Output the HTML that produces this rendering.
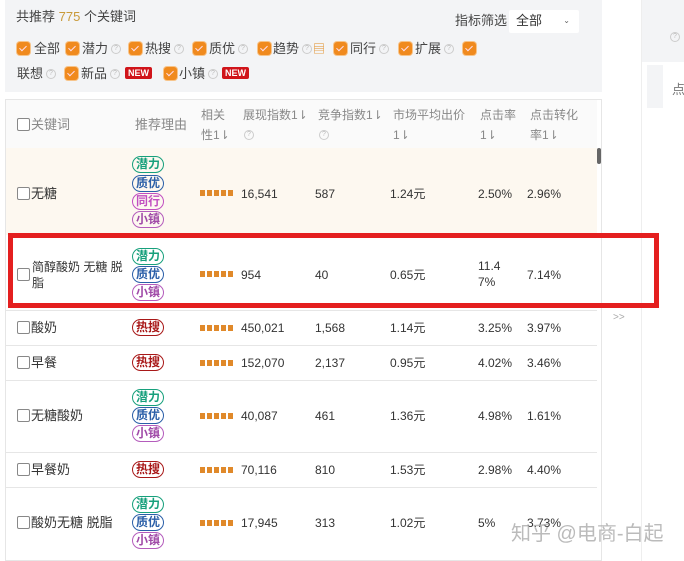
<!DOCTYPE html>
<html><head><meta charset="utf-8"><style>
*{margin:0;padding:0;box-sizing:border-box}
body{width:684px;height:561px;overflow:hidden;background:#fff;font-family:"Liberation Sans","Noto Sans CJK SC",sans-serif;font-size:12px;color:#333;position:relative}
.a{position:absolute;white-space:nowrap;line-height:16px}
.g{color:#777}
.cb{position:absolute;width:13px;height:13px;background:#f08a1e;border-radius:3px;box-shadow:0 0 0 1px #f7c48a}
.cb:after{content:"";position:absolute;left:4px;top:2px;width:3px;height:6px;border:solid #fde;border-width:0 1px 1px 0;transform:rotate(45deg)}
.q{position:absolute;width:10px;height:10px;border:1px solid #ccc;border-radius:50%;font-size:7px;color:#bbb;text-align:center;line-height:8px}
.new{position:absolute;background:#d0141a;color:#fff;font-size:9px;font-weight:bold;padding:0 3px;line-height:12px;border-radius:2px}
.ck{display:inline-block;width:13px;height:13px;border:1px solid #888;border-radius:2px;background:#fff;vertical-align:-2px;margin-right:1px}
.tag{position:absolute;left:132px;width:32px;height:17px;border:1.5px solid;border-radius:9px;font-size:12px;font-weight:bold;text-align:center;line-height:14px}
.t1{color:#17a07c;border-color:#17a07c}
.t2{color:#2b5fa8;border-color:#2b5fa8}
.t3{color:#c14ec1;border-color:#c14ec1}
.t4{color:#a04aa8;border-color:#b45cbc}
.t5{color:#a81818;border-color:#a81818}
.bar{position:absolute;left:200px;width:34px;height:6px;background:repeating-linear-gradient(90deg,#e0892a 0 5px,transparent 5px 7px)}
.line{position:absolute;left:5px;width:592px;height:1px;background:#e6e6e6}
.h{color:#888;font-size:12px;line-height:20px}
.f{position:absolute;color:#444;font-size:13px;line-height:16px}
.k{font-size:13px}
</style></head><body>
<div class="a" style="left:5px;top:0;width:597px;height:92px;background:#f3f4f6"></div>
<div class="a" style="left:16px;top:9px;color:#444;font-size:13px">共推荐 <span style="color:#c99a3a">775</span> 个关键词</div>
<div class="a" style="left:455px;top:13px;color:#444;font-size:13px">指标筛选</div>
<div class="a" style="left:509px;top:10px;width:70px;height:23px;background:#fff;border-radius:2px;padding:3px 0 0 7px;font-size:13px">全部<span style="position:absolute;right:9px;top:3px;font-size:8px;color:#666">⌄</span></div>
<!-- filter row 1 -->
<div class="cb" style="left:17px;top:42px"></div><div class="f" style="left:34px;top:41px">全部</div>
<div class="cb" style="left:66px;top:42px"></div><div class="f" style="left:82px;top:41px">潜力</div><div class="q" style="left:111px;top:44px">?</div>
<div class="cb" style="left:129px;top:42px"></div><div class="f" style="left:145px;top:41px">热搜</div><div class="q" style="left:174px;top:44px">?</div>
<div class="cb" style="left:193px;top:42px"></div><div class="f" style="left:209px;top:41px">质优</div><div class="q" style="left:238px;top:44px">?</div>
<div class="cb" style="left:258px;top:42px"></div><div class="f" style="left:273px;top:41px">趋势</div><div class="q" style="left:302px;top:44px">?</div><div class="f" style="left:313px;top:41px;color:#e08a1e;font-size:12px">▤</div>
<div class="cb" style="left:334px;top:42px"></div><div class="f" style="left:350px;top:41px">同行</div><div class="q" style="left:379px;top:44px">?</div>
<div class="cb" style="left:399px;top:42px"></div><div class="f" style="left:415px;top:41px">扩展</div><div class="q" style="left:444px;top:44px">?</div>
<div class="cb" style="left:463px;top:42px"></div>
<!-- filter row 2 -->
<div class="f" style="left:17px;top:66px">联想</div><div class="q" style="left:46px;top:69px">?</div>
<div class="cb" style="left:65px;top:67px"></div><div class="f" style="left:81px;top:66px">新品</div><div class="q" style="left:110px;top:69px">?</div>
<div class="new" style="left:125px;top:67px">NEW</div>
<div class="cb" style="left:164px;top:67px"></div><div class="f" style="left:179px;top:66px">小镇</div><div class="q" style="left:208px;top:69px">?</div>
<div class="new" style="left:222px;top:67px">NEW</div>

<div class="a" style="left:5px;top:99px;width:597px;height:462px;border:1px solid #e6e6e6"></div>
<div class="a" style="left:6px;top:100px;width:591px;height:48px;background:#fafafa"></div>
<div class="a" style="left:6px;top:148px;width:591px;height:87px;background:#fdf8f0"></div>
<div class="a h" style="left:17px;top:115px;font-size:13px"><span class="ck"></span>关键词</div>
<div class="a h" style="left:135px;top:115px;font-size:13px">推荐理由</div>
<div class="a h" style="left:201px;top:105px">相关<br>性1⇂</div>
<div class="a h" style="left:243px;top:105px">展现指数1⇂</div><div class="q" style="left:244px;top:130px">?</div>
<div class="a h" style="left:318px;top:105px">竞争指数1⇂</div><div class="q" style="left:319px;top:130px">?</div>
<div class="a h" style="left:393px;top:105px">市场平均出价<br>1⇂</div>
<div class="a h" style="left:480px;top:105px">点击率<br>1⇂</div>
<div class="a h" style="left:530px;top:105px">点击转化<br>率1⇂</div>
<div class="a" style="left:597px;top:148px;width:4px;height:16px;background:#666;border-radius:2px"></div>
<!-- right side -->
<div class="a" style="left:641px;top:0;width:1px;height:561px;background:#eee"></div>
<div class="a" style="left:642px;top:0;width:42px;height:62px;background:#f3f4f6"></div>
<div class="q" style="left:670px;top:32px">?</div>
<div class="a" style="left:647px;top:65px;width:16px;height:43px;background:#f3f4f6"></div>
<div class="a g" style="left:672px;top:82px;font-size:13px">点</div>
<div class="a" style="left:613px;top:310px;color:#aaa;font-size:10px">&gt;&gt;</div>
<!-- row lines -->
<div class="line" style="top:310px"></div>
<div class="line" style="top:345px"></div>
<div class="line" style="top:380px"></div>
<div class="line" style="top:452px"></div>
<div class="line" style="top:487px"></div>
<!-- row 1 -->
<div class="a k" style="left:17px;top:186px"><span class="ck"></span>无糖</div>
<div class="tag t1" style="top:156px">潜力</div><div class="tag t2" style="top:175px">质优</div><div class="tag t3" style="top:193px">同行</div><div class="tag t4" style="top:211px">小镇</div>
<div class="bar" style="top:190px"></div>
<div class="a" style="left:241px;top:186px">16,541</div><div class="a" style="left:315px;top:186px">587</div><div class="a" style="left:390px;top:186px">1.24元</div><div class="a" style="left:478px;top:186px">2.50%</div><div class="a" style="left:527px;top:186px">2.96%</div>
<!-- row 2 -->
<div class="a" style="left:17px;top:259px;line-height:16px"><span class="ck" style="position:absolute;left:0;top:9px"></span><div style="margin-left:15px">简醇酸奶 无糖 脱<br>脂</div></div>
<div class="tag t1" style="top:248px">潜力</div><div class="tag t2" style="top:266px">质优</div><div class="tag t4" style="top:284px">小镇</div>
<div class="bar" style="top:271px"></div>
<div class="a" style="left:241px;top:267px">954</div><div class="a" style="left:315px;top:267px">40</div><div class="a" style="left:390px;top:267px">0.65元</div><div class="a" style="left:478px;top:258px;line-height:16px">11.4<br>7%</div><div class="a" style="left:527px;top:267px">7.14%</div>
<div class="a" style="left:8px;top:233px;width:651px;height:75px;border:5px solid #e41f1f"></div>
<!-- row 3 -->
<div class="a k" style="left:17px;top:320px"><span class="ck"></span>酸奶</div>
<div class="tag t5" style="top:319px">热搜</div><div class="bar" style="top:325px"></div>
<div class="a" style="left:241px;top:320px">450,021</div><div class="a" style="left:315px;top:320px">1,568</div><div class="a" style="left:390px;top:320px">1.14元</div><div class="a" style="left:478px;top:320px">3.25%</div><div class="a" style="left:527px;top:320px">3.97%</div>
<!-- row 4 -->
<div class="a k" style="left:17px;top:355px"><span class="ck"></span>早餐</div>
<div class="tag t5" style="top:354px">热搜</div><div class="bar" style="top:360px"></div>
<div class="a" style="left:241px;top:355px">152,070</div><div class="a" style="left:315px;top:355px">2,137</div><div class="a" style="left:390px;top:355px">0.95元</div><div class="a" style="left:478px;top:355px">4.02%</div><div class="a" style="left:527px;top:355px">3.46%</div>
<!-- row 5 -->
<div class="a k" style="left:17px;top:408px"><span class="ck"></span>无糖酸奶</div>
<div class="tag t1" style="top:389px">潜力</div><div class="tag t2" style="top:407px">质优</div><div class="tag t4" style="top:425px">小镇</div>
<div class="bar" style="top:413px"></div>
<div class="a" style="left:241px;top:408px">40,087</div><div class="a" style="left:315px;top:408px">461</div><div class="a" style="left:390px;top:408px">1.36元</div><div class="a" style="left:478px;top:408px">4.98%</div><div class="a" style="left:527px;top:408px">1.61%</div>
<!-- row 6 -->
<div class="a k" style="left:17px;top:462px"><span class="ck"></span>早餐奶</div>
<div class="tag t5" style="top:461px">热搜</div><div class="bar" style="top:467px"></div>
<div class="a" style="left:241px;top:462px">70,116</div><div class="a" style="left:315px;top:462px">810</div><div class="a" style="left:390px;top:462px">1.53元</div><div class="a" style="left:478px;top:462px">2.98%</div><div class="a" style="left:527px;top:462px">4.40%</div>
<!-- row 7 -->
<div class="a k" style="left:17px;top:515px"><span class="ck"></span>酸奶无糖 脱脂</div>
<div class="tag t1" style="top:496px">潜力</div><div class="tag t2" style="top:514px">质优</div><div class="tag t4" style="top:532px">小镇</div>
<div class="bar" style="top:520px"></div>
<div class="a" style="left:241px;top:515px">17,945</div><div class="a" style="left:315px;top:515px">313</div><div class="a" style="left:390px;top:515px">1.02元</div><div class="a" style="left:478px;top:515px">5%</div><div class="a" style="left:527px;top:515px">3.73%</div>
<div class="a" style="left:511px;top:522px;font-size:20px;line-height:24px;color:rgba(170,170,170,0.8)">知乎 @电商-白起</div>
</body></html>
